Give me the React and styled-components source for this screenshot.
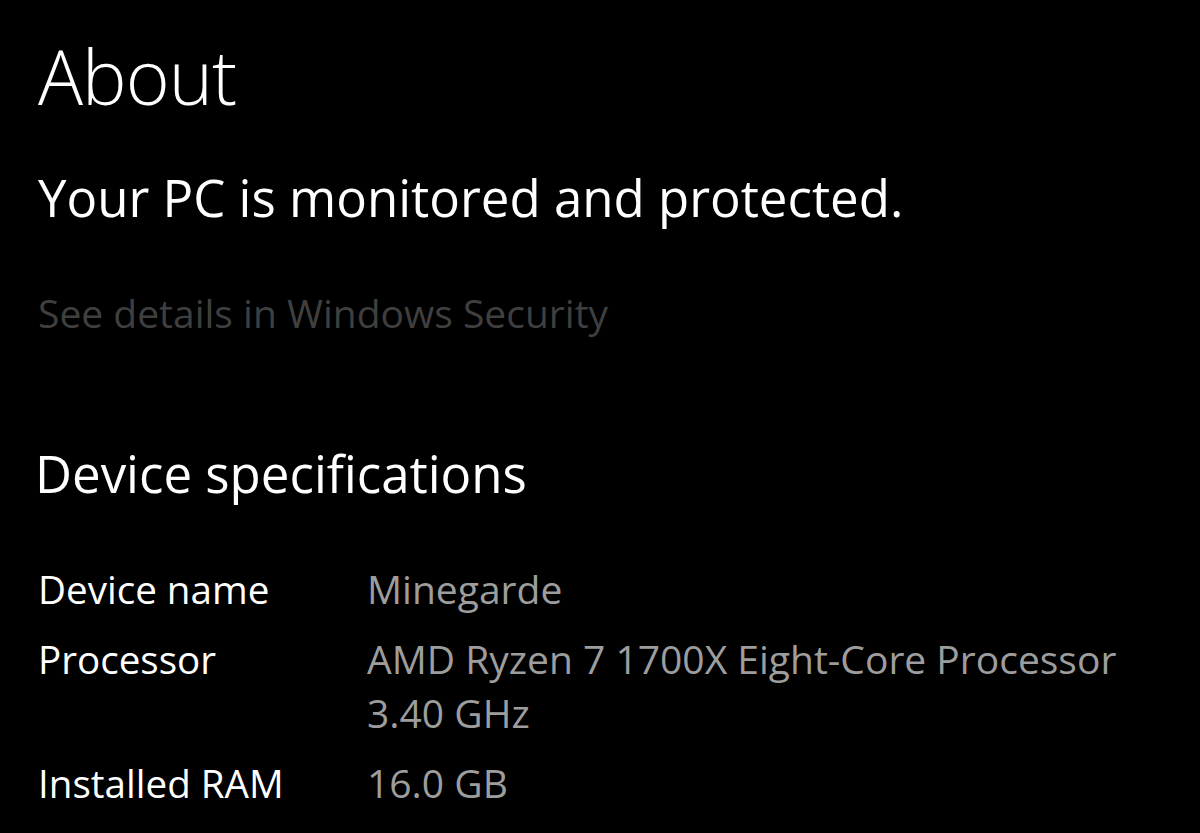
import React from "react";
import styled, { createGlobalStyle } from "styled-components";

const GlobalStyle = createGlobalStyle`
  html, body {
    margin: 0;
    padding: 0;
    background: #000;
  }
  body {
    font-family: "Open Sans", "Noto Sans", sans-serif;
    color: #fff;
  }
`;

const Page = styled.div`
  width: 1200px;
  height: 833px;
  overflow: hidden;
  background: #000;
  padding: 0 0 0 38px;
  box-sizing: border-box;
`;

const Title = styled.h1`
  margin: 0;
  padding-top: 32px;
  font-size: 75px;
  font-weight: 300;
  line-height: 88px;
  letter-spacing: -1px;
`;

const Status = styled.p`
  margin: 0;
  margin-top: 42px;
  font-size: 51px;
  font-weight: 400;
  line-height: 70px;
`;

const SecurityLink = styled.a`
  display: block;
  margin-top: 53px;
  font-size: 39px;
  line-height: 56px;
  color: #3f3f3f;
  text-decoration: none;
`;

const SectionTitle = styled.h2`
  margin: 0;
  margin-top: 97px;
  margin-left: -3px;
  font-size: 51px;
  font-weight: 400;
  line-height: 70px;
`;

const SpecList = styled.dl`
  margin: 0;
  margin-top: 54px;
  display: grid;
  grid-template-columns: 329px 800px;
  row-gap: 16px;
`;

const SpecLabel = styled.dt`
  margin: 0;
  font-size: 38.6px;
  line-height: 54px;
  color: #fff;
`;

const SpecValue = styled.dd`
  margin: 0;
  font-size: 39px;
  line-height: 54px;
  color: #9d9d9d;
`;

const specs = [
  ["Device name", "Minegarde"],
  ["Processor", "AMD Ryzen 7 1700X Eight-Core Processor 3.40 GHz"],
  ["Installed RAM", "16.0 GB"],
];

export default function App() {
  return (
    <Page>
      <GlobalStyle />
      <Title>About</Title>
      <Status>Your PC is monitored and protected.</Status>
      <SecurityLink href="#">See details in Windows Security</SecurityLink>
      <SectionTitle>Device specifications</SectionTitle>
      <SpecList>
        {specs.map(([label, value]) => (
          <React.Fragment key={label}>
            <SpecLabel>{label}</SpecLabel>
            <SpecValue>{value}</SpecValue>
          </React.Fragment>
        ))}
      </SpecList>
    </Page>
  );
}
